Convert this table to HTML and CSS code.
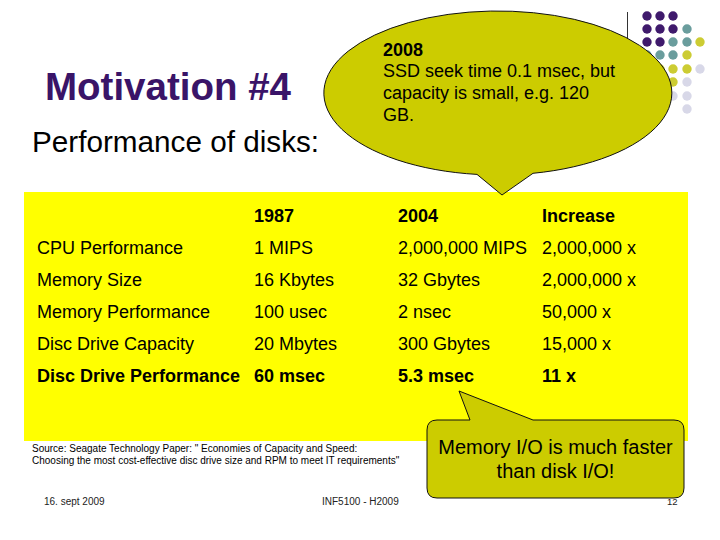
FILE: index.html
```html
<!DOCTYPE html>
<html>
<head>
<meta charset="utf-8">
<link rel="stylesheet" href="styles.css">
</head>
<body>
<div class="slide">
  <svg class="deco" width="720" height="130" viewBox="0 0 720 130">
    <line x1="627.5" y1="12" x2="627.5" y2="110" stroke="#333" stroke-width="1"/>
    <g class="p">
      <circle cx="647" cy="16" r="4.7"/><circle cx="660" cy="16" r="4.7"/><circle cx="673" cy="16" r="4.7"/>
      <circle cx="647" cy="29" r="4.7"/><circle cx="660" cy="29" r="4.7"/><circle cx="673" cy="29" r="4.7"/>
      <circle cx="647" cy="42" r="4.7"/><circle cx="660" cy="42" r="4.7"/>
    </g>
    <g class="t">
      <circle cx="687" cy="29" r="4.7"/>
      <circle cx="673" cy="42" r="4.7"/><circle cx="687" cy="42" r="4.7"/>
      <circle cx="647" cy="55" r="4.7"/><circle cx="660" cy="55" r="4.7"/><circle cx="673" cy="55" r="4.7"/>
    </g>
    <g class="o">
      <circle cx="700" cy="42" r="4.7"/>
      <circle cx="687" cy="55" r="4.7"/>
      <circle cx="647" cy="69" r="4.7"/><circle cx="660" cy="69" r="4.7"/><circle cx="673" cy="69" r="4.7"/><circle cx="687" cy="69" r="4.7"/>
      <circle cx="660" cy="82" r="4.7"/><circle cx="673" cy="82" r="4.7"/>
    </g>
    <g class="l">
      <circle cx="700" cy="69" r="4.7"/>
      <circle cx="687" cy="82" r="4.7"/>
      <circle cx="673" cy="96" r="4.7"/><circle cx="687" cy="96" r="4.7"/>
      <circle cx="687" cy="109" r="4.7"/>
    </g>
  </svg>

  <header class="head">
    <h1 class="title">Motivation #4</h1>
    <p class="subtitle">Performance of disks:</p>
  </header>

  <div class="table">
    <div class="row bold"><span></span><span>1987</span><span>2004</span><span>Increase</span></div>
    <div class="row"><span>CPU Performance</span><span>1 MIPS</span><span>2,000,000 MIPS</span><span>2,000,000 x</span></div>
    <div class="row"><span>Memory Size</span><span>16 Kbytes</span><span>32 Gbytes</span><span>2,000,000 x</span></div>
    <div class="row"><span>Memory Performance</span><span>100 usec</span><span>2 nsec</span><span>50,000 x</span></div>
    <div class="row"><span>Disc Drive Capacity</span><span>20 Mbytes</span><span>300 Gbytes</span><span>15,000 x</span></div>
    <div class="row bold"><span>Disc Drive Performance</span><span>60 msec</span><span>5.3 msec</span><span>11 x</span></div>
  </div>

  <p class="source">Source: Seagate Technology Paper: " Economies of Capacity and Speed:<br>Choosing the most cost-effective disc drive size and RPM to meet IT requirements"</p>

  <footer class="foot">
    <span>16. sept 2009</span>
    <span>INF5100 - H2009</span>
    <span class="num">12</span>
  </footer>

  <div class="callout-top">
    <svg class="shape" width="720" height="200" viewBox="0 0 720 200">
      <path d="M 477 174.4 A 174 82 0 1 1 533 173.3 L 502 195 Z" fill="#cccc00" stroke="#111" stroke-width="1"/>
    </svg>
    <p class="ct-text"><b>2008</b><br>SSD seek time 0.1 msec, but<br>capacity is small, e.g. 120<br>GB.</p>
  </div>

  <div class="callout-bottom">
    <svg class="shape" width="720" height="540" viewBox="0 0 720 540">
      <path d="M 437 420 L 470 420 L 459 391 L 533 420 L 674 420 Q 684 420 684 430 L 684 488 Q 684 498 674 498 L 437 498 Q 427 498 427 488 L 427 430 Q 427 420 437 420 Z" fill="#cccc00" stroke="#111" stroke-width="1"/>
    </svg>
    <p class="cb-text">Memory I/O is much faster<br>than disk I/O!</p>
  </div>
</div>
</body>
</html>
```

FILE: styles.css
```css
html, body {
  margin: 0;
  padding: 0;
  background: #fff;
}

body {
  font-family: "Liberation Sans", Arial, sans-serif;
  color: #000;
}

.slide {
  position: relative;
  width: 720px;
  height: 540px;
  overflow: hidden;
  background: #fff;
}

.deco {
  position: absolute;
  left: 0;
  top: 0;
}

.deco .p { fill: #3f1a6c; }
.deco .t { fill: #6a9d9d; }
.deco .o { fill: #cccc33; }
.deco .l { fill: #d8d8e8; }

.head {
  display: flex;
  flex-direction: column;
}

.title {
  margin: 0;
  padding: 65px 0 0 45px;
  font-size: 38.5px;
  line-height: 44px;
  font-weight: bold;
  color: #3a1468;
}

.subtitle {
  margin: 16px 0 0 32px;
  font-size: 29.7px;
  line-height: 34px;
}

.table {
  margin: 33px 0 0 24px;
  width: 664px;
  height: 249px;
  box-sizing: border-box;
  background: #ffff00;
  padding: 7.5px 0 0 13px;
  display: flex;
  flex-direction: column;
  font-size: 18px;
}

.row {
  display: grid;
  grid-template-columns: 217px 144px 144px auto;
  height: 32.2px;
  line-height: 32.2px;
  white-space: nowrap;
}

.row.bold {
  font-weight: bold;
}

.source {
  margin: 2px 0 0 32px;
  font-size: 10px;
  line-height: 12px;
  white-space: nowrap;
}

.foot {
  margin-top: 28.5px;
  padding-left: 44px;
  display: grid;
  grid-template-columns: 278px 345px auto;
  font-size: 10px;
  line-height: 12px;
  color: #222;
  position: relative;
  z-index: 3;
}

.foot .num {
  font-size: 9.5px;
}

.callout-top,
.callout-bottom {
  position: absolute;
  left: 0;
  top: 0;
  width: 720px;
  height: 540px;
  pointer-events: none;
  z-index: 2;
}

.shape {
  position: absolute;
  left: 0;
  top: 0;
}

.ct-text {
  position: absolute;
  left: 383px;
  top: 39.5px;
  margin: 0;
  font-size: 18px;
  line-height: 21.7px;
  white-space: nowrap;
}

.cb-text {
  position: absolute;
  left: 427px;
  top: 420px;
  width: 257px;
  height: 78px;
  margin: 0;
  display: flex;
  align-items: center;
  justify-content: center;
  text-align: center;
  font-size: 20px;
  line-height: 24px;
}
```
